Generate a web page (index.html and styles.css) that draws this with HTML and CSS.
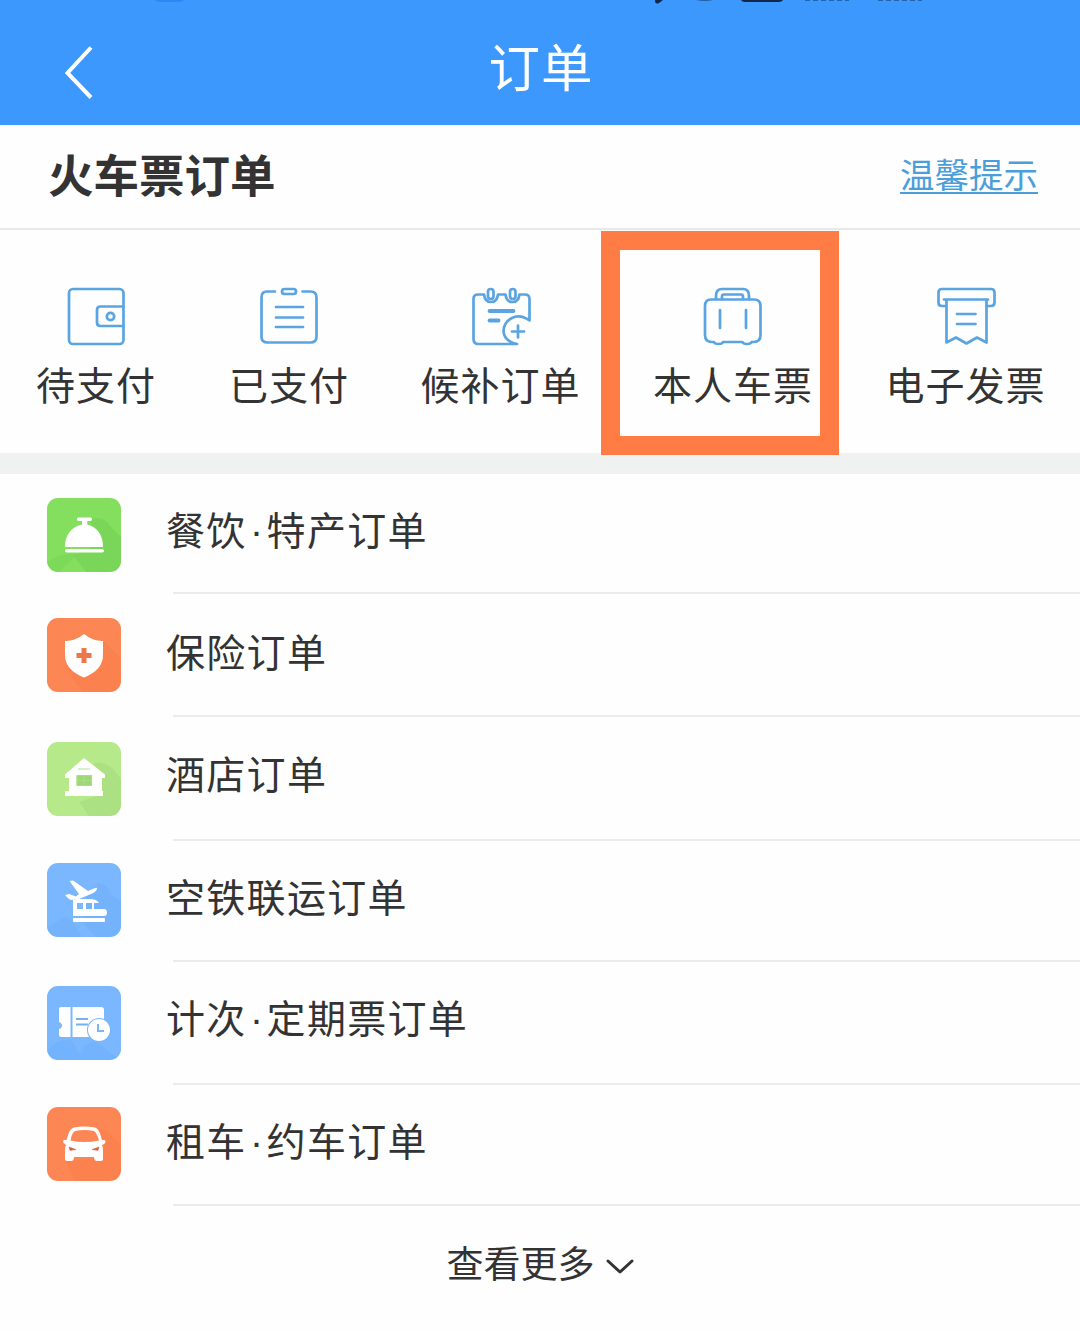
FILE: index.html
```html
<!DOCTYPE html>
<html lang="zh-CN">
<head>
<meta charset="utf-8">
<title>订单</title>
<link rel="stylesheet" href="styles.css">
</head>
<body>
<main class="page">
  <header class="topbar">
    <svg class="status" viewBox="0 0 1080 10" aria-hidden="true">
      <path d="M155 0h29q-2 2-5 2h-19q-3 0-5-2z" fill="#3085f8"/>
      <path d="M655 0h8l-4 3q-4 2-4-3zM741 0h42q-1 2-4 2h-34q-3 0-4-2z" fill="#10284c"/>
      <path d="M696 0h17q-8 2-17 0z" fill="#245b9c"/>
      <path d="M805 .5h44M878 .5h44" stroke="#2565ad" stroke-dasharray="5 3"/>
    </svg>
    <svg class="back" viewBox="0 0 30 54" aria-label="返回"><path d="M27 1.500 3.500 27 27 51.500"/></svg>
    <h1 class="title">订单</h1>
  </header>
  <section class="heading">
    <h2 class="heading-text">火车票订单</h2>
    <a class="tip">温馨提示</a>
  </section>
  <nav class="tabs">
    <div class="tab">
      <svg class="tab-icon" viewBox="0 0 60 60"><rect x="3" y="2" width="54.500" height="55" rx="4"/><path d="M57 19.500H34.500q-3.500 0-3.500 3.500v12.500q0 3.500 3.500 3.500H57"/><circle cx="44.500" cy="29.500" r="3.700"/></svg>
      <span class="label">待支付</span>
    </div>
    <div class="tab">
      <svg class="tab-icon" viewBox="0 0 60 60"><path d="M16 4.500H8q-5.500 0-5.500 6v39q0 6 6 6h43q6 0 6-6v-39q0-6-6-6h-8"/><rect x="23" y="2" width="14" height="5" rx="2.500"/><path d="M17 20h27M17 30.500h27M17 40h27"/></svg>
      <span class="label">已支付</span>
    </div>
    <div class="tab">
      <svg class="tab-icon" viewBox="0 0 60 60"><path d="M46 57H7.500Q2.500 57 2.500 52V12q0-4.500 4.500-4.500h6q1 7.500 7 7.500t7-7.500h7.500q1 7.500 7 7.500t7-7.500H54q4.500 0 4.500 4.500v21.500Q49 27 41 31t-8.500 13Q33 54 46 57"/><rect x="17" y="2" width="5.500" height="10" rx="2.750"/><rect x="39" y="2" width="5.500" height="10" rx="2.750"/><path d="M18.500 24h24M18.500 33.500h9" stroke-width="3.800"/><path d="M41 44.500h12M47 38.500v12"/></svg>
      <span class="label">候补订单</span>
    </div>
    <div class="tab tab-selected">
      <svg class="tab-icon" viewBox="0 0 60 60"><path d="M8 12.500h43q6.500 0 6.500 6.500v29q0 7-7 7h-2q-.5 2-4.500 2t-4.500-2H20q-.5 2-4.500 2T11 55H9q-7 0-7-7V19q0-6.500 6-6.500z"/><path d="M13 12v-3q0-7 6-7h21q6 0 6 7v3M19 12V9.500q0-2 2-2h17q2 0 2 2V12"/><path d="M17 23v18M43 23v18"/></svg>
      <span class="label">本人车票</span>
    </div>
    <div class="tab">
      <svg class="tab-icon" viewBox="0 0 60 60"><path d="M9.500 19H6q-3.500 0-3.500-3.500v-10Q2.500 2 6 2h49q3.500 0 3.500 3.500v10Q58.500 19 55 19h-4.500"/><path d="M8 12.500h44M10.500 12.500v43l9.500-5 10.500 6 10.500-6 9.500 5v-43M21 27h18.500M21 37h18.500"/></svg>
      <span class="label">电子发票</span>
    </div>
    <div class="highlight"></div>
  </nav>
  <div class="band"></div>
  <section class="orders">
    <div class="row row-1">
      <svg class="tile green" viewBox="0 0 74 74"><path d="M43 22q12-6 21 7 5 7 10 9v25q0 11-11 11H39L27 58l24-12z" fill="#70ce54" opacity=".5"/><path d="M0 64q14-10 31-8L12 74H9q-9-2-9-10z" fill="#70ce54" opacity=".3"/><g fill="#fff"><path d="M31.500 19.500h12q1.500 0 1.500 1.700t-1.500 1.800h-3.300v3.500Q56 31 56 49H18q0-18 17-22.500V23h-3.500q-1.500 0-1.500-1.700t1.500-1.800z"/><rect x="18" y="51" width="39" height="3.500" rx="1.700"/></g></svg>
      <div class="row-text">餐饮<span class="dot">·</span>特产订单</div>
    </div>
    <div class="row row-2">
      <svg class="tile orange" viewBox="0 0 74 74"><path d="M55 23q12 8 19 19v21q0 11-11 11H36L18 50h30z" fill="#fb7041" opacity=".22"/><path d="m37 16 5 3.500q7 4 14 3.500v14Q56 52 37 59.500 18 52 18 37V23q7 .5 14-3.500z" fill="#fff"/><path d="M37 30v15M29.500 37.500h15" stroke="#ed764c" stroke-width="5"/></svg>
      <div class="row-text">保险订单</div>
    </div>
    <div class="row row-3">
      <svg class="tile lime" viewBox="0 0 74 74"><path d="M47 21q17-2 27 17v25q0 11-11 11H42L32 60l24-8z" fill="#9ed879" opacity=".45"/><path d="M37 16 18 32.500V36h4v13h-4v5h38v-5h-1V36h3v-3.500zM29.500 33H45v11H29.500z" fill="#fff" fill-rule="evenodd"/><path d="M30 33.500h14.500v10H30zM37 33.500v10M30 38.500h14.500" stroke="#a9df87" fill="#9dd873"/><path d="M31 27h12" stroke="#d8efc9" stroke-width="2"/></svg>
      <div class="row-text">酒店订单</div>
    </div>
    <div class="row row-4">
      <svg class="tile blue" viewBox="0 0 74 74"><path d="m0 65 14-9q6-4 12 3l9 15H9q-9 0-9-9zM39 31l12-11q9-1 13 12l10 6v25q0 11-11 11H49L37 61z" fill="#66a8f6" opacity=".3"/><g fill="#fff"><path d="m18 32 4-1 7 2.500 3-2.500-9.500-13 3.500-.5L41 28l7-3q3-1 2 1-1 3-6 5l-12 5-7 1q-3 0-7-5z"/><path fill-rule="evenodd" d="m26 37 4-1h12q8 0 10 4h-5v6h10q3 0 3 3.500T57 53H26zm4 3v6h6v-6zm9 0v6h6v-6z"/><rect x="26" y="55" width="32" height="4" rx="1"/></g></svg>
      <div class="row-text">空铁联运订单</div>
    </div>
    <div class="row row-5">
      <svg class="tile blue" viewBox="0 0 74 74"><path d="M0 65q12-14 25-10l11 19H9q-9 0-9-9zM37 61q9-9 18-1l14 11q-3 3-8 3H31z" fill="#66a8f6" opacity=".35"/><path d="M14 21h9.500v30H14q-2 0-2-2v-6q3-1 3-3.500T12 36V23q0-2 2-2zM25.500 21H54q3 0 3 3v27H25.500z" fill="#fff"/><path d="M29 33h12M29 38.500h12" stroke="#78aff1" stroke-width="2"/><circle cx="52" cy="44" r="12" fill="#78b4fa"/><circle cx="52" cy="44" r="11" fill="#fff"/><path d="M51 38v7h6" fill="none" stroke="#79b5f8" stroke-width="2"/></svg>
      <div class="row-text">计次<span class="dot">·</span>定期票订单</div>
    </div>
    <div class="row row-6">
      <svg class="tile orange" viewBox="0 0 74 74"><path d="M50 21q9 1 17 10l7 6v26q0 11-11 11H28l-9-19 34-5z" fill="#fb7041" opacity=".22"/><path fill-rule="evenodd" d="M27 20.500q10-2 21 0 3 1 5 6l2 6.500h2q1.500 0 1.500 1.500T57 37l-2 1q1 2 1 5v9q0 2-3 2h-3q-3 0-3-4H27q0 4-3 4h-3q-3 0-3-2v-9q0-3 1-5l-1-1q-2-1-2-2.500t1.500-1.500h2l2-6.500q2-5 5.500-6zM28 24q-3 1-4.500 9.500Q37 36.500 52 33.500 49.500 25 47 24q-9-2-19 0z" fill="#fff"/><path d="m22 40 7 2.500-6 1zM52 40l-7 2.500 6 1z" fill="#d95f42" stroke="#d95f42" stroke-width=".5"/></svg>
      <div class="row-text">租车<span class="dot">·</span>约车订单</div>
    </div>
  </section>
  <footer class="more"><span>查看更多</span><svg class="chevron" viewBox="0 0 30 20"><path d="m3 4 12 11L27 4"/></svg></footer>
</main>
</body>
</html>
```
FILE: styles.css
```css
* { box-sizing: border-box; }
body { margin: 0; background: #fefefe; color: #333; font-family: "Noto Sans CJK SC", sans-serif; }
.page { width: 1080px; height: 1331px; overflow: hidden; display: flex; flex-direction: column; }
.topbar { position: relative; height: 125px; flex: none; background: #3c98fd; display: grid; grid-template-columns: 120px 1fr 120px; }
.status { position: absolute; top: 0; left: 0; width: 1080px; height: 10px; }
.back { width: 30px; height: 54px; margin: 46px 0 0 64px; fill: none; stroke: #fff; stroke-width: 4; }
.title { margin: 28px 0 0 2px; color: #fff; font-size: 51.500px; line-height: 74px; font-weight: 400; letter-spacing: 1px; text-align: center; }
.heading { height: 105px; flex: none; border-bottom: 2px solid #e9e9e9; padding: 0 42px 0 48px; display: flex; justify-content: space-between; align-items: flex-start; }
.heading-text { margin: 16px 0 0; font-size: 45.500px; line-height: 64px; font-weight: 700; }
.tip { margin-top: 23px; color: #4c9edb; font-size: 34.500px; line-height: 50px; text-decoration: underline; text-decoration-thickness: 2px; text-underline-offset: 4px; }
.tabs { position: relative; height: 223px; flex: none; display: grid; grid-template-columns: 192px 194px 229px 236px 229px; }
.tab { display: flex; flex-direction: column; align-items: center; padding-top: 57px; }
.tab-icon { width: 60px; height: 60px; fill: none; stroke: #5aa4e2; stroke-width: 2.700; stroke-linecap: round; stroke-linejoin: round; }
.label { margin-top: 8px; font-size: 39px; line-height: 56px; letter-spacing: 1px; white-space: nowrap; }
.highlight { position: absolute; left: 601px; top: 1px; z-index: 1; width: 238px; height: 224px; border: 19px solid #ff7c45; }
.band { height: 21px; flex: none; background: #f0f2f1; }
.orders { display: flex; flex-direction: column; flex: none; }
.row { display: grid; grid-template-columns: 173px 1fr; align-items: start; }
.row::after { content: ""; grid-column: 2; height: 2px; align-self: end; background: #ebebeb; }
.row-1 { height: 120px; padding-top: 24px; }
.row-2 { height: 123px; padding-top: 24px; }
.row-3 { height: 124px; padding-top: 25px; }
.row-4 { height: 121px; padding-top: 22px; }
.row-5 { height: 123px; padding-top: 24px; }
.row-6 { height: 121px; padding-top: 22px; }
.tile { width: 74px; height: 74px; margin-left: 47px; border-radius: 11px; }
.row-text { margin: 2px 0 0 -7px; font-size: 39px; line-height: 56px; letter-spacing: 1.300px; }
.row-2 .row-text, .row-4 .row-text { margin-top: 4px; }
.row-6 .row-text { margin-top: 4px; }
.dot { display: inline-block; width: 20px; line-height: 40px; font-family: "Liberation Sans", sans-serif; letter-spacing: 0; text-align: center; }
.green { background: #83df5d; }
.orange { background: #fc8654; }
.lime { background: #b6e98a; }
.blue { background: #7ab7ff; }
.more { display: flex; justify-content: center; align-items: center; height: 112px; padding-left: 1px; gap: 10px; font-size: 37px; }
.more span { margin-top: -1px; }
.chevron { width: 30px; height: 20px; margin-top: 9px; fill: none; stroke: #333; stroke-width: 3; stroke-linecap: round; stroke-linejoin: round; }
```
